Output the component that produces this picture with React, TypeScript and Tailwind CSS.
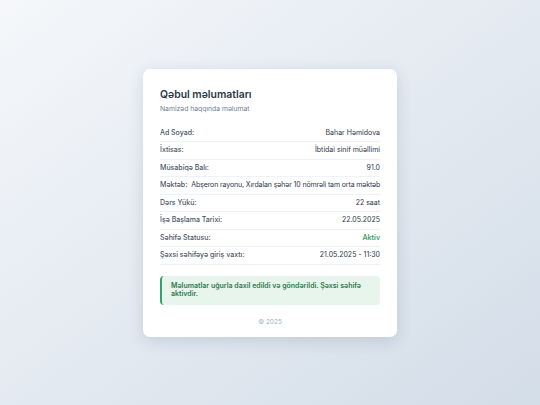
const rows: { label: string; value: string; valueClass?: string }[] = [
  { label: 'Ad Soyad:', value: 'Bahar Həmidova' },
  { label: 'İxtisas:', value: 'İbtidai sinif müəllimi' },
  { label: 'Müsabiqə Balı:', value: '91.0' },
  { label: 'Məktəb:', value: 'Abşeron rayonu, Xırdalan şəhər 10 nömrəli tam orta məktəb', valueClass: 'text-[#2d3748] tracking-[-0.12px]' },
  { label: 'Dərs Yükü:', value: '22 saat' },
  { label: 'İşə Başlama Tarixi:', value: '22.05.2025' },
  { label: 'Səhifə Statusu:', value: 'Aktiv', valueClass: 'text-[#38a169] font-semibold' },
  { label: 'Şəxsi səhifəyə giriş vaxtı:', value: '21.05.2025 - 11:30' },
]

export default function App() {
  return (
    <div
      className="h-screen w-full flex items-center justify-center bg-gradient-to-br from-[#f5f7fa] to-[#d3dde8]"
      style={{ fontFamily: 'Inter, "Noto Sans", sans-serif' }}
    >
      {/* Card */}
      <div className="w-[254px] bg-white rounded-[7px] shadow-[0_4px_16px_rgba(30,50,90,0.14)] px-[17px] pt-[19px] pb-[10px]">
        <h1 className="text-[10.4px] leading-[14px] font-semibold text-[#2d3748]">Qəbul məlumatları</h1>
        <p className="mt-[2px] text-[6.8px] leading-[10px] text-[#718096]">Namizəd haqqında məlumat</p>

        <div className="mt-[11px]">
          {rows.map(r => (
            <div
              key={r.label}
              className="h-[17.5px] flex items-center justify-between gap-[4px] border-b border-[#edf2f7] text-[7px] leading-[10px] whitespace-nowrap"
            >
              <span className="font-medium text-[#4a5568]">{r.label}</span>
              <span className={r.valueClass ?? 'text-[#2d3748]'}>{r.value}</span>
            </div>
          ))}
        </div>

        {/* Success message */}
        <div className="mt-[11px] h-[29px] flex items-center rounded-[4px] border-l-[2px] border-[#38a169] bg-[#e7f5ec] pl-[9px] pr-[8px]">
          <p className="text-[7px] leading-[8.5px] font-semibold text-[#2f7a4d]">
            Məlumatlar uğurla daxil edildi və göndərildi. Şəxsi səhifə aktivdir.
          </p>
        </div>

        <p className="mt-[12px] text-center text-[6.5px] leading-[10px] text-[#a0aec0]">© 2025</p>
      </div>
    </div>
  )
}
